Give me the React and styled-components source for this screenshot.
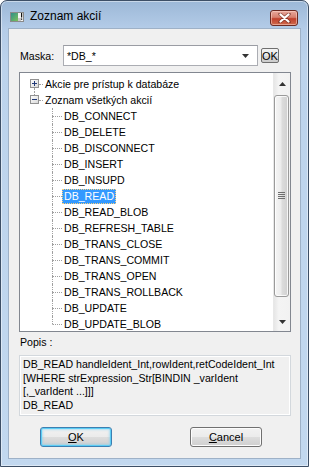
import styled, { createGlobalStyle } from "styled-components";

const GlobalStyle = createGlobalStyle`
  html, body {
    margin: 0;
    padding: 0;
    background: #ffffff;
  }
  * {
    box-sizing: border-box;
  }
`;

const actions = [
  "DB_CONNECT",
  "DB_DELETE",
  "DB_DISCONNECT",
  "DB_INSERT",
  "DB_INSUPD",
  "DB_READ",
  "DB_READ_BLOB",
  "DB_REFRESH_TABLE",
  "DB_TRANS_CLOSE",
  "DB_TRANS_COMMIT",
  "DB_TRANS_OPEN",
  "DB_TRANS_ROLLBACK",
  "DB_UPDATE",
  "DB_UPDATE_BLOB",
];

const AppIcon = () => (
  <svg width="14" height="10" viewBox="0 0 14 10">
    <defs>
      <linearGradient id="ico" x1="0" y1="0" x2="1" y2="1">
        <stop offset="0" stopColor="#2f8f8a" />
        <stop offset="1" stopColor="#7cc05a" />
      </linearGradient>
    </defs>
    <rect x="0.5" y="0.5" width="13" height="9" fill="#f4f4f4" stroke="#8a8a8a" />
    <rect x="1" y="1" width="7" height="8" fill="url(#ico)" />
    <rect x="8" y="6" width="3" height="3" fill="#c8c8c8" />
    <rect x="11" y="1" width="1.2" height="4.5" fill="#111" />
    <rect x="11" y="6.5" width="1.2" height="1.3" fill="#111" />
  </svg>
);

const CloseIcon = () => (
  <svg width="13" height="10" viewBox="0 0 13 10">
    <path
      d="M2 1 L11 9 M11 1 L2 9"
      stroke="#5a1d14"
      strokeWidth="3.6"
      strokeLinecap="round"
      fill="none"
      opacity="0.55"
    />
    <path
      d="M2.5 1.5 L10.5 8.5 M10.5 1.5 L2.5 8.5"
      stroke="#ffffff"
      strokeWidth="2.2"
      strokeLinecap="round"
      fill="none"
    />
  </svg>
);

const ExpandBox = ({ open }) => (
  <svg width="9" height="9" viewBox="0 0 9 9">
    <defs>
      <linearGradient id="exp" x1="0" y1="0" x2="1" y2="1">
        <stop offset="0" stopColor="#ffffff" />
        <stop offset="1" stopColor="#d8d8d8" />
      </linearGradient>
    </defs>
    <rect x="0.5" y="0.5" width="8" height="8" fill="url(#exp)" stroke="#929292" />
    <rect x="2" y="4" width="5" height="1" fill="#223a78" />
    {!open && <rect x="4" y="2" width="1" height="5" fill="#223a78" />}
  </svg>
);

const Grip = () => (
  <svg width="7" height="8" viewBox="0 0 7 8">
    <rect x="0" y="0" width="7" height="1" fill="#6f6f6f" />
    <rect x="0" y="2" width="7" height="1" fill="#6f6f6f" />
    <rect x="0" y="4" width="7" height="1" fill="#6f6f6f" />
    <rect x="0" y="6" width="7" height="1" fill="#6f6f6f" />
  </svg>
);

const Arrow = ({ dir }) => (
  <svg width="7" height="4" viewBox="0 0 7 4">
    {dir === "up" ? (
      <path d="M0 4 L3.5 0 L7 4 Z" fill="#333" />
    ) : (
      <path d="M0 0 L7 0 L3.5 4 Z" fill="#333" />
    )}
  </svg>
);

const App = () => {
  return (
    <>
      <GlobalStyle />
      <Window>
        <TitleBar>
          <AppIcon />
          <Title>Zoznam akcií</Title>
          <CloseButton>
            <CloseIcon />
          </CloseButton>
        </TitleBar>

        <Client>
          <MaskRow>
            <FieldLabel>Maska:</FieldLabel>
            <Combo>
              <span>*DB_*</span>
              <ComboArrow>
                <Arrow dir="down" />
              </ComboArrow>
            </Combo>
            <TinyButton>OK</TinyButton>
          </MaskRow>

          <TreeBox>
            <TreeItems>
              <TopRow>
                <TopGuide>
                  <GuideHalf $h={3} $line={false} />
                  <ExpandBox open={false} />
                  <GuideHalf $h={4} $line={true} />
                </TopGuide>
                <HDots />
                <ItemLabel>Akcie pre prístup k databáze</ItemLabel>
              </TopRow>
              <TopRow>
                <TopGuide>
                  <GuideHalf $h={3} $line={true} />
                  <ExpandBox open={true} />
                  <GuideHalf $h={4} $line={false} />
                </TopGuide>
                <HDots />
                <ItemLabel>Zoznam všetkých akcií</ItemLabel>
              </TopRow>
              {actions.map((name, i) => (
                <ChildRow key={name}>
                  <ChildGuide>
                    <ChildTop />
                    <ChildBottom $last={i === actions.length - 1} />
                  </ChildGuide>
                  <ItemLabel $selected={name === "DB_READ"}>{name}</ItemLabel>
                </ChildRow>
              ))}
            </TreeItems>

            <ScrollBar>
              <ScrollButton>
                <Arrow dir="up" />
              </ScrollButton>
              <ScrollTrack>
                <Thumb>
                  <Grip />
                </Thumb>
              </ScrollTrack>
              <ScrollButton>
                <Arrow dir="down" />
              </ScrollButton>
            </ScrollBar>
          </TreeBox>

          <SectionLabel>Popis :</SectionLabel>
          <Description>
            DB_READ handleIdent_Int,rowIdent,retCodeIdent_Int
            <br />
            [WHERE strExpression_Str[BINDIN _varIdent
            <br />
            [,_varIdent ...]]]
            <br />
            DB_READ
          </Description>

          <ButtonRow>
            <DialogButton $default>
              <u>O</u>K
            </DialogButton>
            <DialogButton>
              <u>C</u>ancel
            </DialogButton>
          </ButtonRow>
        </Client>
      </Window>
    </>
  );
};

export default App;

const Window = styled.div`
  width: 309px;
  height: 467px;
  display: flex;
  flex-direction: column;
  padding: 0 7px 7px;
  border: 1px solid #3d4f66;
  border-radius: 7px 7px 0 0;
  background: linear-gradient(to bottom, #9cb8d7 0px, #b4cce8 28px, #bcd3ec 60px, #c2d8ef 100%);
  box-shadow: inset 0 0 0 1px rgba(255, 255, 255, 0.45);
  font-family: "Liberation Sans", Arial, sans-serif;
`;

const TitleBar = styled.div`
  height: 27px;
  display: flex;
  align-items: flex-start;
  padding: 11px 3px 0 2px;
`;

const Title = styled.div`
  margin-left: 6px;
  margin-top: -3px;
  font-size: 12px;
  line-height: 15px;
  color: #000000;
  flex: 1;
`;

const CloseButton = styled.div`
  width: 28px;
  height: 16px;
  margin-top: -2px;
  display: flex;
  align-items: center;
  justify-content: center;
  border: 1px solid #6b2a22;
  border-radius: 3px;
  background: linear-gradient(to bottom, #e8a89c 0%, #d7806f 45%, #c0402c 55%, #cf6a4c 100%);
  box-shadow: inset 0 0 0 1px rgba(255, 220, 210, 0.5);
`;

const Client = styled.div`
  height: 431px;
  display: flex;
  flex-direction: column;
  background: #f0f0f0;
  border: 1px solid #9eb1c7;
  font-size: 10.6px;
  color: #000000;
`;

const MaskRow = styled.div`
  display: flex;
  align-items: center;
  height: 21px;
  margin-top: 16px;
  padding-left: 11px;
`;

const FieldLabel = styled.div`
  width: 43px;
  line-height: 16px;
`;

const Combo = styled.div`
  width: 195px;
  height: 21px;
  display: flex;
  align-items: center;
  justify-content: space-between;
  padding: 0 8px 0 3px;
  background: #ffffff;
  border: 1px solid #abadb3;
  border-top-color: #9a9ca3;
`;

const ComboArrow = styled.span`
  display: flex;
  align-items: center;
`;

const TinyButton = styled.div`
  width: 18px;
  height: 15px;
  margin-left: 3px;
  display: flex;
  align-items: center;
  justify-content: center;
  font-size: 11px;
  border: 1px solid #6f6f6f;
  border-radius: 2px;
  background: linear-gradient(to bottom, #f4f4f4 0%, #e6e6e6 50%, #d6d6d6 51%, #cdcdcd 100%);
`;

const TreeBox = styled.div`
  width: 272px;
  height: 260px;
  margin: 6px 0 0 10px;
  display: flex;
  background: #ffffff;
  border: 1px solid #828790;
`;

const TreeItems = styled.div`
  flex: 1;
  overflow: hidden;
  padding-top: 3px;
`;

const TopRow = styled.div`
  height: 16px;
  display: flex;
  align-items: center;
  padding-left: 10px;
`;

const TopGuide = styled.div`
  width: 9px;
  height: 16px;
  display: flex;
  flex-direction: column;
  svg {
    display: block;
  }
`;

const GuideHalf = styled.div`
  height: ${(p) => p.$h}px;
  margin-left: 4px;
  border-left: 1px dotted ${(p) => (p.$line ? "#a0a0a0" : "transparent")};
`;

const HDots = styled.div`
  width: 4px;
  height: 1px;
  border-top: 1px dotted #a0a0a0;
`;

const ChildRow = styled.div`
  height: 16px;
  display: flex;
  align-items: center;
  padding-left: 32px;
`;

const ChildGuide = styled.div`
  width: 10px;
  height: 16px;
  display: flex;
  flex-direction: column;
`;

const ChildTop = styled.div`
  height: 8px;
  border-left: 1px dotted #a0a0a0;
`;

const ChildBottom = styled.div`
  height: 8px;
  border-top: 1px dotted #a0a0a0;
  border-left: 1px dotted ${(p) => (p.$last ? "transparent" : "#a0a0a0")};
`;

const ItemLabel = styled.div`
  height: 15px;
  line-height: 13px;
  padding: 0 1px;
  white-space: nowrap;
  border: 1px dotted ${(p) => (p.$selected ? "#ffd27a" : "transparent")};
  background: ${(p) => (p.$selected ? "#3399ff" : "transparent")};
  color: ${(p) => (p.$selected ? "#ffffff" : "#000000")};
`;

const ScrollBar = styled.div`
  width: 17px;
  display: flex;
  flex-direction: column;
  background: linear-gradient(to right, #e6e6e6 0%, #f4f4f4 30%, #f2f2f2 100%);
  border-left: 1px solid #e8e8e8;
`;

const ScrollButton = styled.div`
  height: 20px;
  display: flex;
  align-items: center;
  justify-content: center;
  padding-top: 2px;
`;

const ScrollTrack = styled.div`
  flex: 1;
  padding: 2px 0 14px 0;
  display: flex;
`;

const Thumb = styled.div`
  flex: 1;
  margin: 0 1px 0 0;
  display: flex;
  align-items: center;
  justify-content: center;
  border: 1px solid #9a9a9a;
  border-radius: 3px;
  background: linear-gradient(to right, #f5f5f5 0%, #ececec 45%, #dcdcdc 55%, #d0d0d0 100%);
  box-shadow: inset 0 0 0 1px rgba(255, 255, 255, 0.8);
`;

const SectionLabel = styled.div`
  height: 16px;
  line-height: 16px;
  margin: 2px 0 0 11px;
`;

const Description = styled.div`
  width: 272px;
  height: 61px;
  margin: 5px 0 0 10px;
  padding: 2px 0 0 3px;
  line-height: 13.5px;
  white-space: nowrap;
  overflow: hidden;
  background: #f0f0f0;
  border: 1px solid #d3d8dd;
  box-shadow: inset 0 0 0 1px #ffffff;
`;

const ButtonRow = styled.div`
  display: flex;
  gap: 78px;
  margin-top: 11px;
  padding-left: 31px;
`;

const DialogButton = styled.div`
  width: 72px;
  height: 20px;
  display: flex;
  align-items: center;
  justify-content: center;
  font-size: 11px;
  border: 1px solid ${(p) => (p.$default ? "#3c7fb1" : "#707070")};
  border-radius: 3px;
  background: linear-gradient(to bottom, #f2f2f2 0%, #ebebeb 50%, #dddddd 51%, #cfcfcf 100%);
  box-shadow: ${(p) => (p.$default ? "inset 0 0 0 1px #5ccdf5, inset 0 0 2px 2px rgba(120, 210, 245, 0.5)" : "inset 0 0 0 1px #fcfcfc")};
  u {
    text-decoration: underline;
  }
`;
